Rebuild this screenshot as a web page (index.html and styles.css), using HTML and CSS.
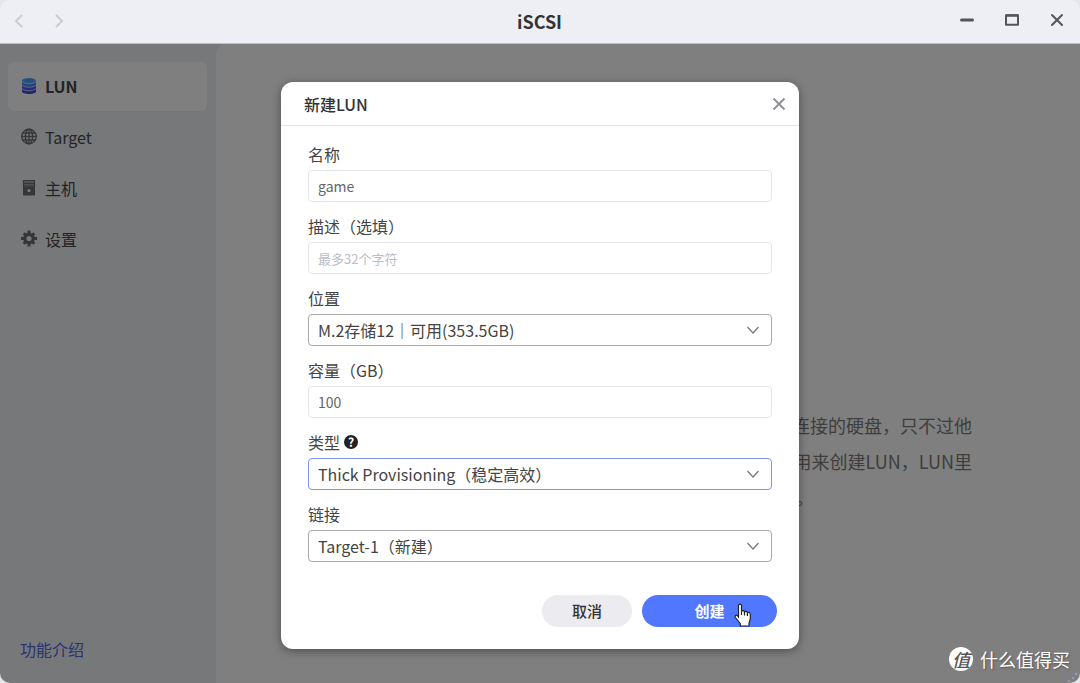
FILE: index.html
```html
<!DOCTYPE html>
<html lang="zh-CN">
<head>
<meta charset="utf-8">
<title>iSCSI</title>
<link rel="stylesheet" href="styles.css">
</head>
<body>
<div class="window">
  <header class="titlebar">
    <nav class="history">
      <button class="icon-button" aria-label="后退"><svg width="10" height="16" viewBox="0 0 10 16"><path d="M8 2 2 8l6 6"/></svg></button>
      <button class="icon-button" aria-label="前进"><svg width="10" height="16" viewBox="0 0 10 16"><path d="m2 2 6 6-6 6"/></svg></button>
    </nav>
    <h1 class="title">iSCSI</h1>
    <div class="controls">
      <button class="icon-button" aria-label="最小化"><svg width="16" height="16" viewBox="0 0 16 16"><path d="M2.500 8h11" stroke-width="3" stroke-linecap="round"/></svg></button>
      <button class="icon-button" aria-label="最大化"><svg width="16" height="16" viewBox="0 0 16 16"><path d="M2 3.200h12v9.600H2z" stroke-linejoin="round"/><path d="M2 3.500h12" stroke-width="2.400"/></svg></button>
      <button class="icon-button" aria-label="关闭"><svg width="16" height="16" viewBox="0 0 16 16"><path d="m3 3 10 10M13 3 3 13" stroke-linecap="round"/></svg></button>
    </div>
  </header>

  <div class="workspace">
    <aside class="sidebar">
      <nav class="menu">
        <a class="menu-item active" href="#lun">
          <svg width="16" height="18" viewBox="0 0 16 18"><path fill="#4444e0" d="M1 11.500v3c0 3.300 14 3.300 14 0v-3c-1 2.700-13 2.700-14 0z"/><path fill="#4858f0" d="M1 8v3c0 3.300 14 3.300 14 0V8c-1 2.700-13 2.700-14 0z"/><path fill="#4880fa" d="M1 4.500v3c0 3.300 14 3.300 14 0v-3c-1 2.700-13 2.700-14 0z"/><ellipse cx="8" cy="3.800" rx="7" ry="2.800" fill="#48a4ff"/><path fill="none" stroke="#c0d0ff" stroke-width=".9" d="M1 4.500c1 3 13 3 14 0M1 8c1 3 13 3 14 0M1 11.500c1 3 13 3 14 0"/></svg>
          LUN
        </a>
        <a class="menu-item" href="#target">
          <svg width="16" height="18" viewBox="0 0 16 18" fill="none" stroke="#6c6c70" stroke-width="1.300"><circle cx="8" cy="8.500" r="7.300"/><ellipse cx="8" cy="8.500" rx="3.600" ry="7.300"/><path d="M8 1.200v14.600M.7 8.500h14.600M1.800 5h12.400M1.800 12h12.400"/></svg>
          Target
        </a>
        <a class="menu-item" href="#host">
          <svg width="16" height="18" viewBox="0 0 16 18"><path fill="#a4a4a8" d="M2 1h12v7H2z"/><path fill="none" stroke="#6c6c70" stroke-width="1.200" d="M2 1.500h12M2 4.500h12M2 7.200h12M2.500 1v7M13.500 1v7"/><path fill="#6c6c70" fill-rule="evenodd" d="M2 8h12v8.500H2zM8 10a1.600 1.600 0 1 0 0 3.200A1.600 1.600 0 0 0 8 10z"/></svg>
          主机
        </a>
        <a class="menu-item" href="#settings">
          <svg width="16" height="18" viewBox="0 0 16 18"><circle cx="8" cy="8.500" r="4.200" fill="none" stroke="#6c6c70" stroke-width="3.200"/><path stroke="#6c6c70" stroke-width="3" d="M8 .5v3M8 13.500v3M0 8.500h3M13 8.500h3M2.700 3.200l2 2M11.300 11.800l2 2M13.300 3.200l-2 2M4.700 11.800l-2 2"/></svg>
          设置
        </a>
      </nav>
      <a class="intro" href="#intro">功能介绍</a>
    </aside>
    <main class="content">
      <div class="description">
        <p>连接的硬盘，只不过他</p>
        <p>用来创建LUN，LUN里</p>
        <p class="last">。</p>
      </div>
    </main>

    <div class="overlay">
      <form class="dialog" role="dialog" aria-labelledby="dialog-title">
        <div class="dialog-header">
          <h2 class="dialog-title" id="dialog-title">新建LUN</h2>
          <button type="button" class="icon-button" aria-label="关闭对话框"><svg width="16" height="16" viewBox="0 0 16 16"><path d="m2.500 2.500 11 11M13.500 2.500l-11 11"/></svg></button>
        </div>
        <div class="fields">
          <div class="field">
            <label for="name">名称</label>
            <input class="control" id="name" type="text" value="game">
          </div>
          <div class="field">
            <label for="desc">描述（选填）</label>
            <input class="control" id="desc" type="text" placeholder="最多32个字符">
          </div>
          <div class="field">
            <label for="location">位置</label>
            <div class="select-wrap">
              <select class="control" id="location"><option>M.2存储12｜可用(353.5GB)</option></select>
              <svg class="chevron" width="14" height="14" viewBox="0 0 14 14"><path d="m1.500 4 5.500 6 5.500-6"/></svg>
            </div>
          </div>
          <div class="field">
            <label for="capacity">容量（GB）</label>
            <input class="control" id="capacity" type="text" value="100">
          </div>
          <div class="field">
            <div class="label-row">
              <label for="type">类型</label>
              <span class="help">?</span>
            </div>
            <div class="select-wrap">
              <select class="control focused" id="type"><option>Thick Provisioning（稳定高效）</option></select>
              <svg class="chevron" width="14" height="14" viewBox="0 0 14 14"><path d="m1.500 4 5.500 6 5.500-6"/></svg>
            </div>
          </div>
          <div class="field">
            <label for="link">链接</label>
            <div class="select-wrap">
              <select class="control" id="link"><option>Target-1（新建）</option></select>
              <svg class="chevron" width="14" height="14" viewBox="0 0 14 14"><path d="m1.500 4 5.500 6 5.500-6"/></svg>
            </div>
          </div>
        </div>
        <div class="actions">
          <button type="button" class="button">取消</button>
          <button type="button" class="button primary">创建
            <svg class="pointer" width="18" height="24" viewBox="0 0 18 24"><path d="M4.500 14V2.800C4.500.5 7.500.5 7.500 2.800V8.500c.5-1.300 2.900-1 3 .5.600-1 2.700-.8 2.900.7 1-.8 2.900-.2 2.900 1.600v4.200c0 2-1.300 3.300-1.300 5V23H6.300v-2.300L1.400 14.500c-1-1.700 1-3 2-1.800z"/><path d="M7.500 8.500v3.500M10.500 9v3.500M13.400 10v3"/></svg>
          </button>
        </div>
      </form>
    </div>

    <div class="watermark"><span class="badge">值</span>什么值得买</div>
    <svg class="grip" width="14" height="14" viewBox="0 0 14 14"><g fill="#8f9bd0"><circle cx="3" cy="12" r="1.200"/><circle cx="7" cy="9" r="1.200"/><circle cx="10" cy="5" r="1.200"/></g></svg>
  </div>
</div>
</body>
</html>
```
FILE: styles.css
```css
* { box-sizing: border-box; }

body {
  margin: 0;
  background: #e4e5e8;
  color: #333;
  font: 16px/24px "Noto Sans CJK SC", sans-serif;
}

h1, h2, p { margin: 0; }
a { color: inherit; text-decoration: none; }

.window {
  display: flex;
  flex-direction: column;
  min-height: 100vh;
  border-radius: 10px;
  overflow: hidden;
}

.icon-button {
  display: flex;
  padding: 0;
  border: 0;
  background: none;
  color: inherit;
}
.icon-button svg { fill: none; stroke: currentColor; stroke-width: 2; }

.titlebar {
  display: grid;
  grid-template-columns: 1fr auto 1fr;
  align-items: center;
  height: 44px;
  padding: 0 15px 2px 14px;
  border-bottom: 1px solid #bfc0c4;
  background: #eeeff5;
}
.history { display: flex; gap: 30px; color: #cbccd0; }
.title { font-size: 18px; font-weight: 700; line-height: 24px; }
.controls { display: flex; justify-content: flex-end; gap: 29px; color: #555; padding-bottom: 2px; }

.workspace {
  position: relative;
  display: flex;
  flex: 1;
  background: #eff0f4;
}

.sidebar {
  display: flex;
  flex-direction: column;
  justify-content: space-between;
  width: 216px;
  padding: 18px 9px 22px 8px;
}
.menu { display: flex; flex-direction: column; gap: 2px; }
.menu-item {
  display: flex;
  align-items: center;
  gap: 8px;
  height: 49px;
  padding: 0 13px 1px;
  border-radius: 6px;
  color: #484848;
}
.active { background: #fff; font-weight: 700; }
.intro { padding: 0 12px; color: #5068e8; }

.content {
  flex: 1;
  padding: 363px 108px 0 0;
  border-top-left-radius: 10px;
  background: #fff;
}
.description {
  color: #7c7c7c;
  font-size: 18px;
  line-height: 36px;
  width: 180px;
  margin-left: auto;
  text-align: right;
  white-space: nowrap;
}
.last { padding-left: 4px; text-align: left; }

.overlay {
  position: absolute;
  inset: 0;
  display: flex;
  align-items: flex-start;
  justify-content: center;
  padding-top: 38px;
  background: rgba(0, 0, 0, .5);
}

.dialog {
  width: 518px;
  border-radius: 12px;
  background: #fff;
  box-shadow: 0 2px 10px rgba(0, 0, 0, .4);
}
.dialog-header {
  display: flex;
  align-items: center;
  justify-content: space-between;
  height: 44px;
  padding: 1px 12px 0 23px;
  border-bottom: 1px solid #e5e5e8;
  color: #929298;
}
.dialog-title { color: #333; font-size: 16px; font-weight: 500; line-height: 24px; }

.fields {
  display: flex;
  flex-direction: column;
  gap: 12px;
  padding: 16px 27px 33px;
}
.field { display: flex; flex-direction: column; gap: 4px; color: #444; }
.label-row { display: flex; align-items: center; gap: 4px; }
.help {
  width: 14px;
  height: 14px;
  border-radius: 50%;
  background: #222;
  color: #fff;
  font-size: 12px;
  font-weight: 700;
  line-height: 14px;
  text-align: center;
}

.control {
  width: 100%;
  height: 32px;
  padding: 0 9px;
  border: 1px solid #e6e6ea;
  border-radius: 4px;
  outline: 0;
  background: #fff;
  color: #666;
  font: 14px/24px "Noto Sans CJK SC", sans-serif;
}
.control::placeholder { color: #bbbcc4; font-size: 13px; }
.select-wrap { position: relative; display: flex; }
select.control {
  appearance: none;
  border-color: #a8a8a8;
  color: #444;
  font-size: 16px;
}
select.focused { border-color: #7f94ec; }
.chevron {
  position: absolute;
  top: 9px;
  right: 12px;
  fill: none;
  stroke: #777;
  stroke-width: 1.2;
  pointer-events: none;
}

.actions {
  display: flex;
  justify-content: flex-end;
  gap: 10px;
  padding: 0 22px 22px;
}
.button {
  position: relative;
  width: 90px;
  height: 32px;
  padding: 0;
  border: 0;
  border-radius: 16px;
  background: #ebebf0;
  color: #333;
  font: 500 15px/24px "Noto Sans CJK SC", sans-serif;
}
.primary { width: 135px; background: #5277ff; color: #fff; font-weight: 700; }
.pointer {
  position: absolute;
  top: 8px;
  right: 25px;
  fill: #fff;
  stroke: #222;
  stroke-width: 1.2;
}

.watermark {
  position: absolute;
  right: 10px;
  bottom: 12px;
  display: flex;
  align-items: center;
  gap: 7px;
  color: #fff;
  font-size: 18px;
  text-shadow: 1px 1px 2px #555;
}
.badge {
  width: 24px;
  height: 24px;
  border-radius: 50%;
  background: #fff;
  color: #555;
  font-weight: 500;
  font-style: italic;
  line-height: 24px;
  text-align: center;
  text-shadow: none;
}
.grip { position: absolute; right: 0; bottom: 0; }
```
